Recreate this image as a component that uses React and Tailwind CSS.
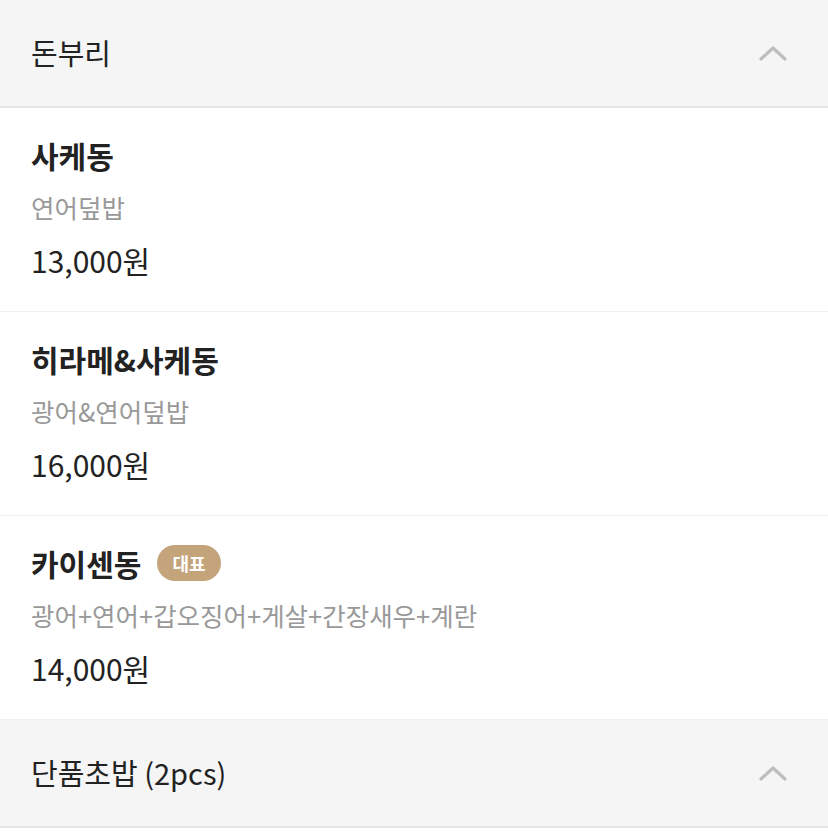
const menu = [
    { name: '사케동', desc: '연어덮밥', price: '13,000원' },
    { name: '히라메&사케동', desc: '광어&연어덮밥', price: '16,000원' },
    { name: '카이센동', desc: '광어+연어+갑오징어+게살+간장새우+계란', price: '14,000원', best: true },
];

const Chevron = () => (
    <svg width="30" height="18" viewBox="0 0 30 18" fill="none">
        <path d="M3 15 L15 4 L27 15" stroke="#bdbdbd" strokeWidth="3.2" strokeLinecap="round" strokeLinejoin="round" />
    </svg>
);

const SectionHeader = ({ title }) => (
    <div className="flex items-center justify-between h-[108px] bg-[#f5f5f5] border-b-2 border-[#e6e6e6] pl-[31px] pr-[40px]">
        <span className="text-[29px] text-[#222]">{title}</span>
        <Chevron />
    </div>
);

const MenuItem = ({ item }) => (
    <div className="bg-white pl-[31px] pt-[29px] h-[204px] border-b border-[#efefef]">
        <div className="flex items-center gap-[16px] h-[36px]">
            <span className="text-[30px] leading-[36px] font-bold text-[#222]">{item.name}</span>
            {item.best && (
                <span className="h-[36px] px-[15px] rounded-full bg-[#c3a47b] text-white text-[18px] font-bold flex items-center">대표</span>
            )}
        </div>
        <div className="mt-[18px] text-[25.5px] leading-[32px] text-[#999]">{item.desc}</div>
        <div className="mt-[19px] text-[30px] leading-[36px] text-[#222]">{item.price}</div>
    </div>
);

const App = () => {
    return (
        <div className="w-[828px] h-[831px] overflow-hidden bg-white" style={{ fontFamily: '"Noto Sans CJK KR", "Noto Sans", sans-serif' }}>
            <SectionHeader title="돈부리" />
            {menu.map((item) => (
                <MenuItem key={item.name} item={item} />
            ))}
            <SectionHeader title="단품초밥 (2pcs)" />
        </div>
    );
};

export default App;
